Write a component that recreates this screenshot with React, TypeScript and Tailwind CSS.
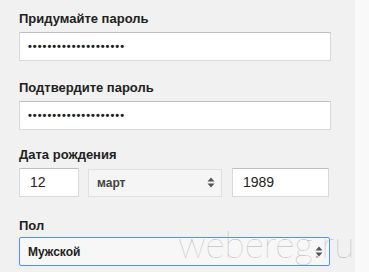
import React from "react";

function Arrows() {
  return (
    <svg width="8" height="11" viewBox="0 0 8 11" className="shrink-0">
      <path d="M4 0.5 L7.5 4.5 L0.5 4.5 Z" fill="#555" />
      <path d="M4 10.5 L7.5 6.5 L0.5 6.5 Z" fill="#555" />
    </svg>
  );
}

function Label({ children }: { children: React.ReactNode }) {
  return (
    <div className="h-4 leading-4 text-[13px] font-bold text-[#222] mb-[5px]">
      {children}
    </div>
  );
}

const box = "h-[29px] bg-white border border-[#d9d9d9] border-t-[#c0c0c0] flex items-center";

export default function App() {
  const dots = "••••••••••••••••••••";
  return (
    <div
      className="relative w-[369px] h-[272px] overflow-hidden bg-[#f9f9f9]"
      style={{ fontFamily: '"Liberation Sans", Arial, sans-serif' }}
    >
      <div className="w-[355px] h-full bg-[#f1f1f1] pl-[19px] pt-[11px]">
        <div className="w-[312px]">
          <Label>Придумайте пароль</Label>
          <div className={`${box} pl-[8px] text-[11px] font-bold text-[#222] tracking-[1px]`}>{dots}</div>
        </div>

        <div className="w-[312px] mt-[19px]">
          <Label>Подтвердите пароль</Label>
          <div className={`${box} pl-[8px] text-[11px] font-bold text-[#222] tracking-[1px]`}>{dots}</div>
        </div>

        <div className="mt-[17px]">
          <Label>Дата рождения</Label>
          <div className="flex items-center">
            <div className={`${box} w-[60px] h-[28px] pl-[10px] text-[14px] text-[#222]`}>12</div>
            <div className="ml-[9px] w-[134px] h-[28px] bg-[#f5f5f5] border border-[#e0e0e0] flex items-center justify-between pl-[8px] pr-[6px] text-[12px] font-bold text-[#444]">
              <span>март</span>
              <Arrows />
            </div>
            <div className={`${box} ml-[10px] w-[97px] h-[28px] pl-[10px] text-[14px] text-[#222]`}>1989</div>
          </div>
        </div>

        <div className="mt-[21px]">
          <Label>Пол</Label>
          <div className="w-[311px] h-[29px] -mt-[2px] bg-[#f7f7f7] border border-[#4d90fe] rounded-[2px] flex items-center justify-between pl-[8px] pr-[6px] text-[12px] font-bold text-[#222]">
            <span>Мужской</span>
            <Arrows />
          </div>
        </div>
      </div>

      <div
        className="absolute left-[178px] top-[224px] text-[37px] leading-[40px] text-[#b0b0b0]"
        style={{ fontFamily: "Lato, sans-serif", fontWeight: 100 }}
      >
        webereg.ru
      </div>
    </div>
  );
}
